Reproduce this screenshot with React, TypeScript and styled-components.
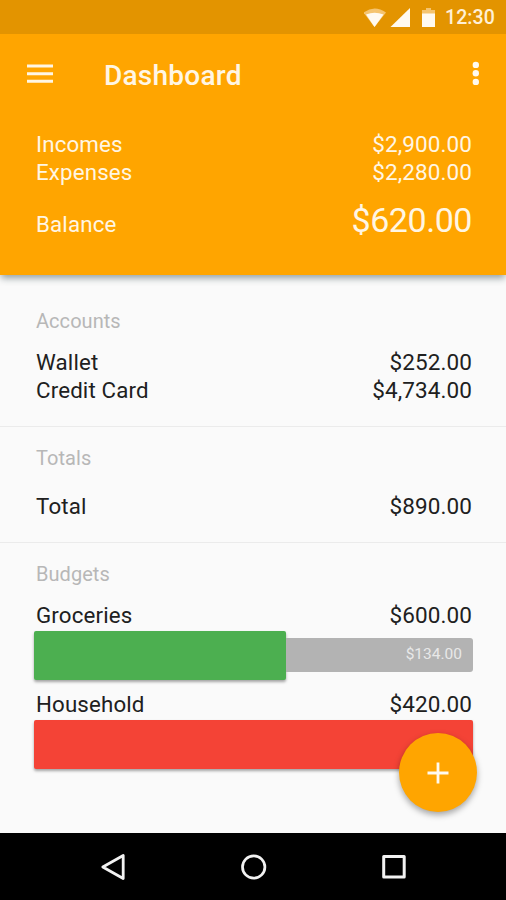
import React from "react";
import styled, { createGlobalStyle } from "styled-components";

const GlobalStyle = createGlobalStyle`
  * { box-sizing: border-box; }
  body { margin: 0; font-family: Roboto, "Liberation Sans", sans-serif; }
`;

const Screen = styled.div`
  position: relative;
  display: flex;
  flex-direction: column;
  width: 506px;
  height: 900px;
  overflow: hidden;
  background: #fafafa;
`;

const Header = styled.header`
  height: 275px;
  flex: none;
  background: #ffa500;
  color: #fff6e4;
  box-shadow: 0 4px 7px -1px rgba(20, 45, 50, 0.45);
`;

const StatusBar = styled.div`
  display: flex;
  align-items: center;
  justify-content: flex-end;
  height: 34px;
  padding-right: 11px;
  background: #e39400;
`;

const Clock = styled.time`
  width: 50px;
  margin: 2px 0 0 9px;
  font-size: 19.5px;
  font-weight: 500;
  line-height: 34px;
  letter-spacing: 0.1px;
  color: #fff0d5;
  white-space: nowrap;
`;

const Toolbar = styled.div`
  display: flex;
  align-items: center;
  height: 80px;
  padding: 0 20px 0 26px;
`;

const IconButton = styled.button`
  display: flex;
  padding: 0;
  border: 0;
  background: none;
`;

const Title = styled.h1`
  flex: 1;
  margin: 3px 0 0 50px;
  font-size: 28px;
  font-weight: 500;
  line-height: 34px;
  letter-spacing: 0.25px;
`;

const Summary = styled.div`
  padding: 16px 34px 0 36px;
`;

const Row = styled.div<{ $gap?: number }>`
  display: flex;
  align-items: baseline;
  justify-content: space-between;
  height: 28px;
  margin-top: ${(p) => p.$gap ?? 0}px;
  font-size: 22.3px;
  line-height: 28px;
  letter-spacing: 0.15px;
`;

const Amount = styled.span<{ $large?: boolean }>`
  font-size: ${(p) => (p.$large ? 34 : 22.5)}px;
  letter-spacing: ${(p) => (p.$large ? -0.45 : 0.1)}px;
`;

const Section = styled.section<{ $height: number }>`
  height: ${(p) => p.$height}px;
  padding: 17px 34px 0 36px;
  border-bottom: 1px solid #ebebeb;
  color: #202020;
  &:last-of-type { border-bottom: 0; }
`;

const Content = styled.main`
  flex: 1;
  padding-top: 15px;
`;

const SectionTitle = styled.h2`
  margin: 0;
  font-size: 20px;
  font-weight: 400;
  line-height: 28px;
  letter-spacing: 0.05px;
  color: #b7b7b7;
`;

const Budget = styled.div`
  height: 49px;
  margin: 1.5px -1px 10.5px -2px;
  display: flex;
  align-items: center;
`;

const Fill = styled.div<{ $color: string; $width: number }>`
  flex: none;
  width: ${(p) => p.$width}px;
  height: 49px;
  border-radius: 2px;
  background: ${(p) => p.$color};
  box-shadow: 0 2px 3px rgba(0, 0, 0, 0.35);
`;

const Remaining = styled.div`
  flex: 1;
  height: 34px;
  padding-right: 11px;
  border-radius: 0 3px 3px 0;
  background: #b3b3b3;
  color: #e8e8e8;
  font-size: 15.5px;
  line-height: 33px;
  text-align: right;
`;

const AddButton = styled.button`
  position: absolute;
  right: 29px;
  bottom: 88px;
  display: flex;
  align-items: center;
  justify-content: center;
  width: 78px;
  height: 79px;
  padding: 0;
  border: 0;
  border-radius: 50%;
  background: #ffa500;
  box-shadow: 0 3px 6px rgba(0, 0, 0, 0.35);
`;

const NavBar = styled.nav`
  flex: none;
  display: flex;
  align-items: center;
  justify-content: space-between;
  height: 67px;
  padding: 0 98px 0 99px;
  background: #000;
`;

const StatusIcons = () => (
  <svg width="72" height="20" viewBox="364 7 72 20">
    <path d="M363.500 12.500Q374.500 4.500 386 12.500L374.500 27Z" fill="#f5c46f" />
    <path d="M366 14.500Q374.500 11 383.500 14.500L374.500 27Z" fill="#fffaf0" />
    <path d="M390.500 27L410 8V27Z" fill="#fffaf0" />
    <path d="M422 14V10H426V8H431V10H435V14Z" fill="#f5c46f" />
    <path d="M422 13.500H435V27H422Z" fill="#fffaf0" />
  </svg>
);

export default function App() {
  return (
    <>
      <GlobalStyle />
      <Screen>
        <Header>
          <StatusBar>
            <StatusIcons />
            <Clock>12:30</Clock>
          </StatusBar>
          <Toolbar>
            <IconButton aria-label="Menu">
              <svg width="28" height="20" viewBox="0 0 28 20" fill="none" stroke="#fff6e4" strokeWidth="3">
                <path d="M1 2H27M1 9.800H27M1 17.300H27" />
              </svg>
            </IconButton>
            <Title>Dashboard</Title>
            <IconButton aria-label="More options">
              <svg width="20" height="28" viewBox="0 0 20 28" fill="#fffaf0">
                <circle cx="9.800" cy="4.900" r="3.200" />
                <circle cx="9.800" cy="13.300" r="3.200" />
                <circle cx="9.800" cy="21.900" r="3.200" />
              </svg>
            </IconButton>
          </Toolbar>
          <Summary>
            <Row><span>Incomes</span><Amount>$2,900.00</Amount></Row>
            <Row><span>Expenses</span><Amount>$2,280.00</Amount></Row>
            <Row $gap={20}><span>Balance</span><Amount $large>$620.00</Amount></Row>
          </Summary>
        </Header>
        <Content>
          <Section $height={137}>
            <SectionTitle>Accounts</SectionTitle>
            <Row $gap={13}><span>Wallet</span><Amount>$252.00</Amount></Row>
            <Row><span>Credit Card</span><Amount>$4,734.00</Amount></Row>
          </Section>
          <Section $height={116}>
            <SectionTitle>Totals</SectionTitle>
            <Row $gap={20}><span>Total</span><Amount>$890.00</Amount></Row>
          </Section>
          <Section $height={260}>
            <SectionTitle>Budgets</SectionTitle>
            <Row $gap={13}><span>Groceries</span><Amount>$600.00</Amount></Row>
            <Budget>
              <Fill $color="#4caf50" $width={252} />
              <Remaining>$134.00</Remaining>
            </Budget>
            <Row><span>Household</span><Amount>$420.00</Amount></Row>
            <Budget>
              <Fill $color="#f44336" $width={439} />
            </Budget>
          </Section>
        </Content>
        <AddButton aria-label="Add transaction">
          <svg width="22" height="22" viewBox="0 0 22 22" stroke="#fffaf0" strokeWidth="2.800">
            <path d="M0.500 11H21.500M11 0.500V21.500" />
          </svg>
        </AddButton>
        <NavBar>
          <IconButton aria-label="Back">
            <svg width="28" height="30" viewBox="0 0 28 30" fill="none" stroke="#f2f2f2" strokeWidth="2.800" strokeLinejoin="round">
              <path d="M3.800 15L24.200 3.500V26.500Z" />
            </svg>
          </IconButton>
          <IconButton aria-label="Home">
            <svg width="28" height="28" viewBox="0 0 28 28" fill="none" stroke="#f2f2f2" strokeWidth="2.700">
              <circle cx="13.700" cy="14" r="11.200" />
            </svg>
          </IconButton>
          <IconButton aria-label="Recent apps">
            <svg width="28" height="28" viewBox="0 0 28 28" fill="none" stroke="#f2f2f2" strokeWidth="3" strokeLinejoin="round">
              <rect x="3.700" y="3.500" width="20.500" height="20.500" />
            </svg>
          </IconButton>
        </NavBar>
      </Screen>
    </>
  );
}
